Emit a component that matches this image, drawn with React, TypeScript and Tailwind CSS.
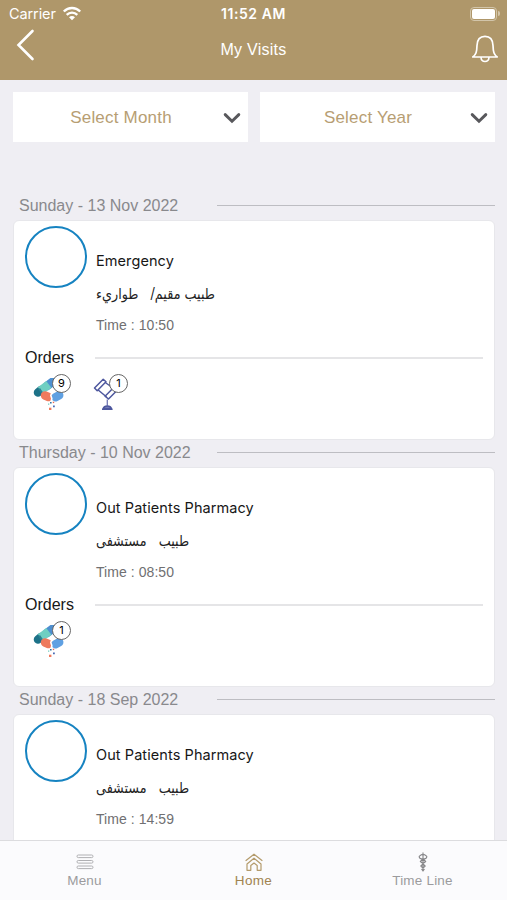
import React from "react";

function Wifi() {
  return (
    <svg width="20" height="15" viewBox="0 0 20 15" fill="none" stroke="white" strokeWidth="2.4">
      <path d="M1.8 5.5C6.5 .9 13.500.9 18.200 5.500M4.700 8.800C7.700 5.900 12.300 5.900 15.300 8.800" />
      <path d="M7 11.200C8.700 9.700 11.300 9.700 13 11.200L10 14.200Z" fill="white" stroke="none" />
    </svg>
  );
}

function Chevron() {
  return (
    <svg width="18" height="12" viewBox="0 0 18 12" fill="none" stroke="#58585c" strokeWidth="2.900" strokeLinecap="round">
      <path d="M2.200 2.600 9 9.300l6.800-6.700" />
    </svg>
  );
}

function Pills() {
  return (
    <svg className="block" width="34" height="34" viewBox="0 0 34 34" fill="none">
      <path d="M20 3.500 14 8" stroke="#4e8fd0" strokeWidth="8.500" strokeLinecap="round" />
      <path d="M5 14.500 8 12" stroke="#1d7288" strokeWidth="8.500" strokeLinecap="round" />
      <path d="M7.500 12.600 15.800 6.300" stroke="#6fcfc2" strokeWidth="8.500" />
      <path d="m6.200 10.600 4.300 6.300" stroke="#2b8293" strokeWidth="2" />
      <path d="m12 17.500 3.500 1.500" stroke="#ee7a5d" strokeWidth="8.500" strokeLinecap="round" />
      <path d="m22.500 19.200 3.700-2" stroke="#5fa0e2" strokeWidth="8.500" strokeLinecap="round" />
      <path d="m19.300 13.500-1.500 4 1 3-.8 4" stroke="white" strokeWidth="1.600" />
      <path d="M17 24h1.600v1.600H17z" fill="#2f74a3" />
      <path d="M20 27.500h1.800v1.800H20z" fill="#4a6bb5" />
      <path d="M16 29.700h2.400V32H16z" fill="#ee7a5d" />
      <path d="M19.800 23.700h1.400v1.400h-1.400z" fill="#e76b52" />
      <path d="M15 25.500h1.300v1.300H15z" fill="#6fcfc2" />
    </svg>
  );
}

function Scanner() {
  return (
    <svg className="block" width="34" height="34" viewBox="0 0 34 34" fill="none" stroke="#4d579e" strokeWidth="1.500" strokeLinejoin="round">
      <path d="M4.500 10 13.200 1.200l2.800 2.600-8.800 9zM8.200 12l8.400 7M15.200 4.500l8.600 6M15 18.200l9-9 3.200 3L18.500 21z" />
      <path d="M17.300 21.500v6.300" strokeWidth="1.300" stroke="#7178b4" />
      <path d="M12 31.200h10.600M13.200 30.500c1-3.200 7.200-3.200 8.200 0z" fill="#8288bf" />
    </svg>
  );
}

function Order({ kind, count }: { kind: string; count: number }) {
  return (
    <div className="relative h-[38px] w-[38px] pt-1">
      {kind === "pills" ? <Pills /> : <Scanner />}
      <span className="absolute top-0 left-[19px] flex h-[19px] w-[19px] items-center justify-center rounded-full border border-[#666] bg-white font-[Inter] text-[11px] leading-none text-black">
        {count}
      </span>
    </div>
  );
}

type Visit = { date: string; title: string; doctor: string; time: string; orders: { kind: string; count: number }[] };

const visits: Visit[] = [
  { date: "Sunday - 13 Nov 2022", title: "Emergency", doctor: "طبيب مقيم/   طواريء", time: "10:50", orders: [{ kind: "pills", count: 9 }, { kind: "scan", count: 1 }] },
  { date: "Thursday - 10 Nov 2022", title: "Out Patients Pharmacy", doctor: "طبيب   مستشفى", time: "08:50", orders: [{ kind: "pills", count: 1 }] },
  { date: "Sunday - 18 Sep 2022", title: "Out Patients Pharmacy", doctor: "طبيب   مستشفى", time: "14:59", orders: [] },
];

function VisitItem({ visit }: { visit: Visit }) {
  return (
    <section className="h-[247px] shrink-0">
      <div className="flex h-[26px] items-center pr-3 pl-[19px]">
        <h2 className="w-[198px] text-[16px] leading-[26px] whitespace-nowrap text-[#89898d]">{visit.date}</h2>
        <div className="mb-[2px] h-px flex-1 bg-[#bdbdc2]" />
      </div>
      <article className="mr-[12px] ml-[13px] mt-px h-[220px] rounded-[6px] border border-[#e7e7eb] bg-white px-[11px] pt-[5px]">
        <div className="flex h-[120px]">
          <div className="h-[62px] w-[62px] rounded-full border-[2.500px] border-[#1683c1]" />
          <div className="ml-[9px] pt-[24px]">
            <h3 className="h-[22px] font-[Inter] text-[14.500px] leading-[22px] tracking-[0.080px] whitespace-nowrap text-[#171717]">{visit.title}</h3>
            <p dir="rtl" className="mt-[11px] h-[22px] w-fit origin-left scale-x-[0.850] font-['DejaVu_Sans'] text-[15px] leading-[22px] whitespace-pre text-[#222]">{visit.doctor}</p>
            <p className="mt-[10px] h-[20px] text-[14px] leading-[20px] tracking-[0.060px] whitespace-nowrap text-[#707072]">Time : {visit.time}</p>
          </div>
        </div>
        {visit.orders.length > 0 && (
          <>
            <div className="flex h-[24px] items-center">
              <h4 className="w-[70px] text-[16px] text-[#171717]">Orders</h4>
              <div className="h-[2px] flex-1 bg-[#e5e5e7]" />
            </div>
            <div className="mt-[4px] flex gap-[19px] pl-[8px]">
              {visit.orders.map((o) => <Order key={o.kind} kind={o.kind} count={o.count} />)}
            </div>
          </>
        )}
      </article>
    </section>
  );
}

export default function App() {
  return (
    <div className="flex h-[900px] w-[507px] flex-col overflow-hidden bg-[#efeef3] font-['Liberation_Sans',sans-serif]">
      <header className="h-[80px] shrink-0 bg-[#af976a] text-white">
        <div className="grid h-[27px] grid-cols-3 items-center px-[9px]">
          <div className="flex items-center gap-[6px] font-[Inter] text-[14.500px] tracking-[-0.100px]"><span>Carrier</span><Wifi /></div>
          <div className="text-center font-[Inter] text-[14px] font-semibold tracking-[0.550px] whitespace-nowrap">11:52 AM</div>
          <div className="-mr-[2px] flex items-center justify-end">
            <div className="h-[14px] w-[27px] rounded-[4px] border border-[#d2c5aa] p-px"><div className="h-full rounded-[2px] bg-white" /></div>
            <div className="ml-px h-[5px] w-[2px] rounded-r bg-[#d2c5aa]" />
          </div>
        </div>
        <div className="grid h-[44px] grid-cols-[1fr_auto_1fr] items-center px-[9px]">
          <svg width="20" height="32" viewBox="0 0 20 32" className="-mt-[9px] ml-[7px]" fill="none" stroke="white" strokeWidth="2.600" strokeLinecap="round"><path d="M16.500 2 2.500 16l14 14" /></svg>
          <h1 className="pt-[2px] text-center text-[16px] tracking-[0.250px] whitespace-nowrap">My Visits</h1>
          <svg className="-mr-px justify-self-end" width="28" height="28" viewBox="0 0 28 28" fill="none" stroke="white" strokeWidth="1.700" strokeLinejoin="round"><path d="M1.800 22c3.300-2.500 4-5 4.200-11.500C6.200 4.500 9.400 1.300 14 1.300s7.800 3.200 8 9.200c.2 6.500.9 9 4.200 11.500zM10 22.500c.5 5.300 7.500 5.300 8 0" /></svg>
        </div>
      </header>
      <main className="flex min-h-0 flex-1 flex-col overflow-hidden">
        <div className="mt-[12px] mb-[51px] flex h-[50px] shrink-0 gap-[12px] pr-[12px] pl-[13px]">
          {["Select Month", "Select Year"].map((label) => (
            <button key={label} className="flex flex-1 items-center bg-white pt-px pr-[7px] pl-[6px] text-[17px] tracking-[0.200px] text-[#b79e73]">
              <span className="flex-1 pt-px text-center">{label}</span><Chevron />
            </button>
          ))}
        </div>
        {visits.map((v) => <VisitItem key={v.date} visit={v} />)}
      </main>
      <nav className="grid h-[60px] shrink-0 grid-cols-3 border-t border-[#dcdcdf] bg-[#fbfbfd] pt-[11px] text-[13.500px] text-[#9b9b9e]">
        <div className="flex flex-col items-center"><svg width="20" height="20" viewBox="0 0 20 20" fill="none" stroke="#b0b0b3" strokeWidth="1"><rect x="2" y="3" width="16" height="2.600" rx="1.300" /><rect x="2" y="8.500" width="16" height="2.600" rx="1.300" /><rect x="2" y="14" width="16" height="2.600" rx="1.300" /></svg><span className="leading-[18px] tracking-[0.150px]">Menu</span></div>
        <div className="flex flex-col items-center text-[#a18350]"><svg width="20" height="20" viewBox="0 0 20 20" fill="none" stroke="#b49b6c" strokeWidth="1.200" strokeLinejoin="round" strokeLinecap="round"><path d="M2 8.500 10 2.200l8 6.300M3 12l7-5.800 7 5.800v6.300h-3.800v-4.800L10 11l-3.200 2.500v4.800H3z" /></svg><span className="leading-[18px] tracking-[0.350px]">Home</span></div>
        <div className="flex flex-col items-center"><svg width="20" height="20" viewBox="0 0 20 20" fill="none" stroke="#858588" strokeWidth="1.100" strokeLinejoin="round"><path d="M10 .5v19M10 3C8 1.500 8 4 6.200 4.200 6 6.500 8 7 10 7M10 3c2-1.500 2 1 3.800 1.200C14 6.500 12 7 10 7M10 7 7.300 9.500 10 11.500l2.700-2zM10 12l-2.200 2 2.200 2 2.200-2zM8.500 17l1.500 2 1.500-2" /></svg><span className="leading-[18px] tracking-[0.200px]">Time Line</span></div>
      </nav>
    </div>
  );
}
